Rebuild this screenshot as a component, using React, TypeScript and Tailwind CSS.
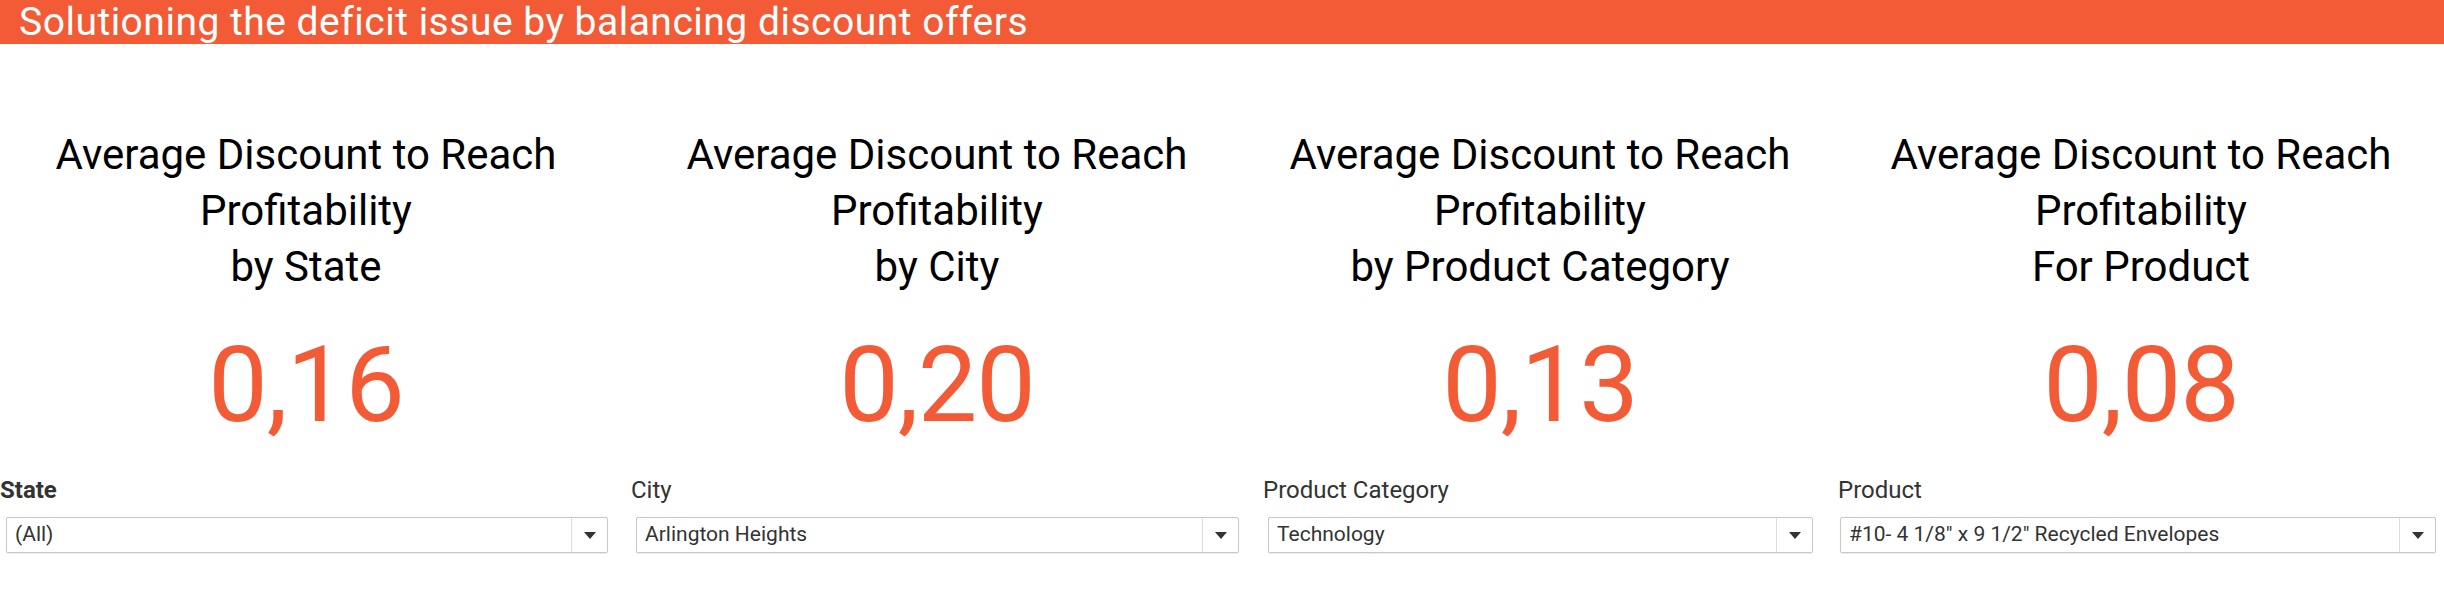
import React, { FC } from "react";

const ORANGE = "#F35B36";

type Col = {
  title: string;
  value: string;
  label: string;
  selected: string;
  boldLabel?: boolean;
  width: string;
  gap: string;
  boxInset: string;
};

const cols: Col[] = [
  { title: "by State", value: "0,16", label: "State", selected: "(All)", boldLabel: true, width: "w-[612px]", gap: "ml-0", boxInset: "ml-[6px] mr-[4px]" },
  { title: "by City", value: "0,20", label: "City", selected: "Arlington Heights", width: "w-[612px]", gap: "ml-[19px]", boxInset: "ml-[5px] mr-[4px]" },
  { title: "by Product Category", value: "0,13", label: "Product Category", selected: "Technology", width: "w-[554px]", gap: "ml-[20px]", boxInset: "ml-[5px] mr-[4px]" },
  { title: "For Product", value: "0,08", label: "Product", selected: "#10- 4 1/8\u2033 x 9 1/2\u2033 Recycled Envelopes", width: "w-[606px]", gap: "ml-[21px]", boxInset: "ml-[2px] mr-[8px]" },
];

const Dropdown: FC<{ text: string; inset: string }> = ({ text, inset }) => (
  <div className={`${inset} h-[36px] flex items-stretch border border-[#c8c8c8] rounded-[2px] bg-white shadow-[0_1px_1px_rgba(0,0,0,0.08)]`}>
    <div className="flex-1 flex items-center pl-[8px] text-[21px] text-[#333333] truncate">{text}</div>
    <div className="w-[36px] border-l border-[#dddddd] flex items-center justify-center">
      <svg width="12" height="7" viewBox="0 0 12 7">
        <path d="M0 0 L12 0 L6 7 Z" fill="#333333" />
      </svg>
    </div>
  </div>
);

const App: FC = () => {
  return (
    <div className="w-[2444px] h-[608px] bg-white overflow-hidden font-['Roboto',sans-serif]">
      <div className="h-[44px] bg-[#F35B36] text-white text-[39px] leading-[44px] tracking-[0.5px] pl-[19px] whitespace-nowrap">
        Solutioning the deficit issue by balancing discount offers
      </div>
      <div className="flex pt-[83px]">
        {cols.map((c) => (
          <div key={c.label} className={`${c.width} ${c.gap} flex flex-col`}>
            <div className="text-center text-black text-[42px] leading-[56px]">
              <div>Average Discount to Reach</div>
              <div>Profitability</div>
              <div>{c.title}</div>
            </div>
            <div className="mt-[37px] text-center text-[106px] leading-none tracking-[-1px]" style={{ color: ORANGE }}>
              {c.value}
            </div>
            <div className={`mt-[40px] text-[24px] leading-[24px] text-[#333333] ${c.boldLabel ? "font-bold" : ""}`}>
              {c.label}
            </div>
            <div className="mt-[15px]">
              <Dropdown text={c.selected} inset={c.boxInset} />
            </div>
          </div>
        ))}
      </div>
    </div>
  );
};

export default App;
